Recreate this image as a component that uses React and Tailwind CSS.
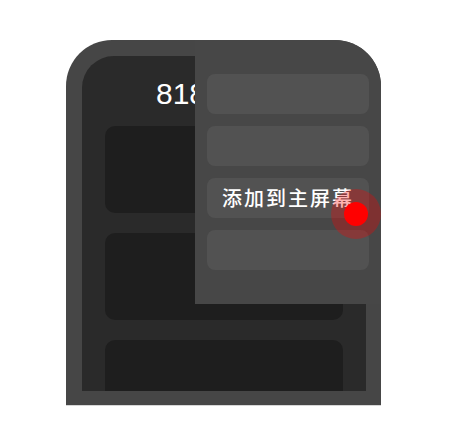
export default function App() {
  return (
    <div className="relative w-[450px] h-[445px] bg-white overflow-hidden" style={{ fontFamily: '"Liberation Sans", "Noto Sans CJK SC", sans-serif' }}>
      <div className="pt-[40px] pl-[66px]">
        <div className="relative w-[315px] h-[365px] bg-[#464646] rounded-t-[46px] overflow-hidden">
          <div className="ml-[16px] mt-[16px] w-[284px] h-[335px] bg-[#2a2a2a] rounded-t-[32px] overflow-hidden pt-[20px]">
            <div className="pl-[74px] text-[30px] leading-[36px] text-white">8180</div>
            <div className="mt-[14px] ml-[23px] w-[238px] flex flex-col gap-[20px]">
              <div className="h-[87px] rounded-[10px] bg-[#1e1e1e]" />
              <div className="h-[87px] rounded-[10px] bg-[#1e1e1e]" />
              <div className="h-[87px] rounded-[10px] bg-[#1e1e1e]" />
            </div>
          </div>
          <div className="absolute left-[129px] top-0 w-[186px] h-[264px] bg-[#474747] px-[12px] py-[34px] flex flex-col gap-[12px]">
            <div className="h-[40px] rounded-lg bg-[#525252]" />
            <div className="h-[40px] rounded-lg bg-[#525252]" />
            <div className="h-[40px] rounded-lg bg-[#525252] flex items-center pl-[15px] text-[20px] font-medium tracking-[2px] text-white" style={{ fontFamily: '"Noto Sans CJK SC", sans-serif' }}>添加到主屏幕</div>
            <div className="h-[40px] rounded-lg bg-[#525252]" />
          </div>
        </div>
        <div className="w-[315px] h-px bg-[#d6d6d6]" />
      </div>
      <div className="absolute left-[331px] top-[189px] w-[50px] h-[50px] rounded-full bg-[rgba(255,0,0,0.3)] flex items-center justify-center">
        <div className="w-[24px] h-[24px] rounded-full bg-[#ff0000]" />
      </div>
    </div>
  );
}
